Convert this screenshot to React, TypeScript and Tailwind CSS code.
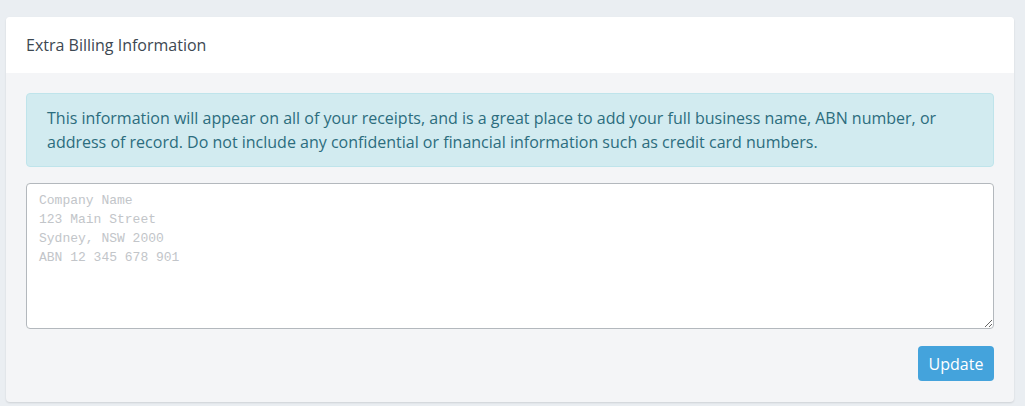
import React from "react";

export default function App() {
  return (
    <div
      className="min-h-[406px] w-full bg-[#eaeef2] pt-[17px] pl-[6px] pr-[11px] pb-[4px]"
      style={{ fontFamily: '"Open Sans", "Liberation Sans", sans-serif' }}
    >
      <div className="rounded-[4px] bg-[#f4f5f7] shadow-[0_1px_2px_rgba(0,0,0,0.12)] overflow-hidden">
        <div className="h-[56px] bg-white flex items-center px-[20px] text-[16px] text-[#3d4852]">
          Extra Billing Information
        </div>
        <div className="px-[20px] pt-[20px] pb-[21px]">
          <div className="rounded-[4px] border border-[#bfe4eb] bg-[#d2ebf0] px-[20px] py-[12px] text-[16px] leading-[24px] text-[#2c6d7e]">
            This information will appear on all of your receipts, and is a great place to add your full business name, ABN number, or address of record. Do not include any confidential or financial information such as credit card numbers.
          </div>
          <textarea
            className="mt-[16px] block w-full h-[146px] rounded-[4px] border border-[#b3b8bd] bg-white px-[12px] py-[7px] text-[13px] leading-[19px] text-[#333] placeholder:text-[#c2c5c9] outline-none"
            style={{ fontFamily: '"Courier New", "Liberation Mono", monospace' }}
            placeholder={"Company Name\n123 Main Street\nSydney, NSW 2000\nABN 12 345 678 901"}
          />
          <div className="mt-[17px] flex justify-end">
            <button className="h-[35px] w-[76px] rounded-[4px] bg-[#44a3dc] text-white text-[16px]">
              Update
            </button>
          </div>
        </div>
      </div>
    </div>
  );
}
